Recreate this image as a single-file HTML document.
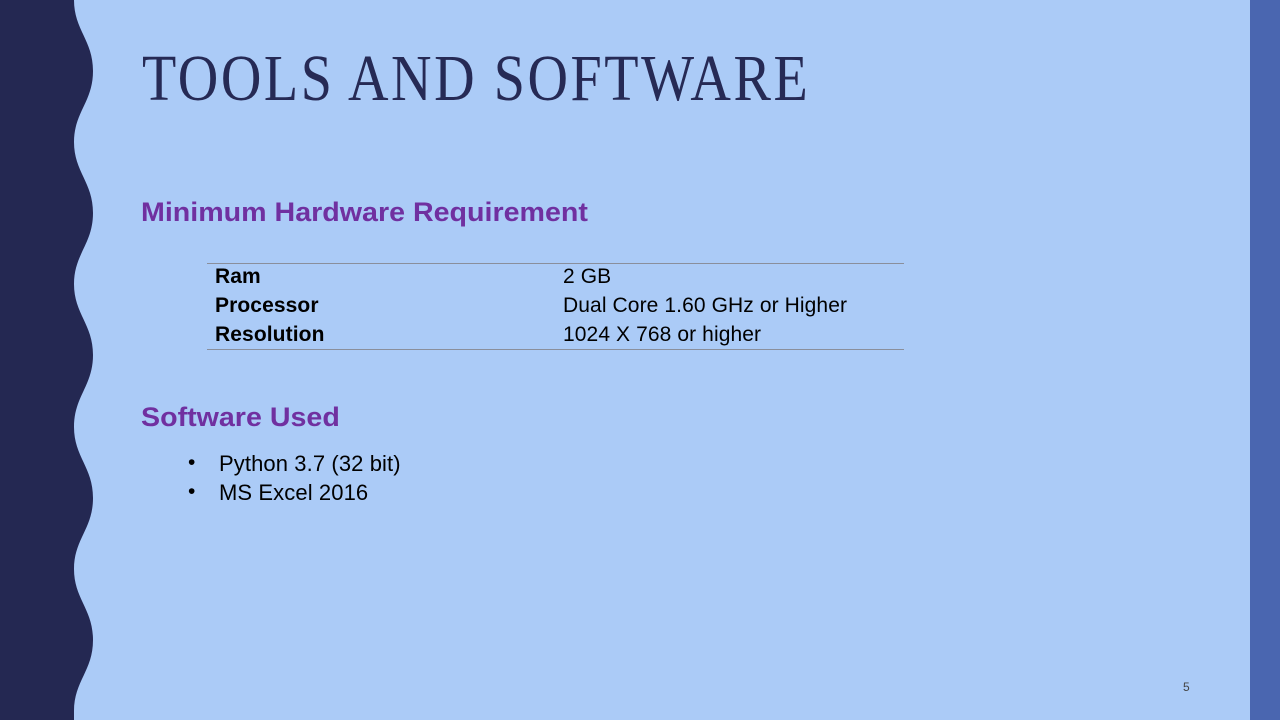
<!DOCTYPE html>
<html><head><meta charset="utf-8"><style>
html,body{margin:0;padding:0}
body{width:1280px;height:720px;position:relative;overflow:hidden;background:#abcbf7;font-family:"Liberation Sans",sans-serif}
svg{position:absolute;left:0;top:0}
.title{position:absolute;left:142px;top:43px;font-family:"Liberation Serif",serif;font-size:66px;letter-spacing:3px;color:#262a55;white-space:nowrap;line-height:72px;transform:scaleX(0.85);transform-origin:0 0}
.h{position:absolute;left:141px;font-size:27px;font-weight:bold;color:#7030a0;letter-spacing:0;white-space:nowrap;transform:scaleX(1.06);transform-origin:0 0}
.t{position:absolute;font-size:21px;color:#000;white-space:nowrap;letter-spacing:0.1px}
.b{font-weight:bold}
.line{position:absolute;left:207px;width:697px;height:1px;background:#8a8f9c}
.strip{position:absolute;left:1250px;top:0;width:30px;height:720px;background:#4a66b0}
</style></head><body>
<svg width="120" height="720" viewBox="0 0 120 720">
<path fill="#242852" d="M0 0 L74 0 C74 30 93 40 93 71 C93 102 74 112 74 142 C74 172 93 182 93 213 C93 244 74 254 74 284 C74 314 93 324 93 355 C93 386 74 396 74 427 C74 457 93 467 93 498 C93 529 74 539 74 569 C74 599 93 609 93 640 C93 671 74 681 74 711 L74 720 L0 720 Z"/>
</svg>
<div class="strip"></div>
<div class="title">TOOLS AND SOFTWARE</div>
<div class="h" style="top:197px">Minimum Hardware Requirement</div>
<div class="line" style="top:263px"></div>
<div class="line" style="top:349px"></div>
<div class="t b" style="left:215px;top:265px">Ram</div>
<div class="t" style="left:563px;top:265px">2 GB</div>
<div class="t b" style="left:215px;top:294px">Processor</div>
<div class="t" style="left:563px;top:294px">Dual Core 1.60 GHz or Higher</div>
<div class="t b" style="left:215px;top:323px">Resolution</div>
<div class="t" style="left:563px;top:323px">1024 X 768 or higher</div>
<div class="h" style="top:402px">Software Used</div>
<div class="t" style="left:188px;top:451px">•</div>
<div class="t" style="left:219px;top:451px;font-size:22px">Python 3.7 (32 bit)</div>
<div class="t" style="left:188px;top:480px">•</div>
<div class="t" style="left:219px;top:480px;font-size:22px">MS Excel 2016</div>
<div style="position:absolute;left:1183px;top:680px;font-size:12px;color:#444">5</div>
</body></html>
